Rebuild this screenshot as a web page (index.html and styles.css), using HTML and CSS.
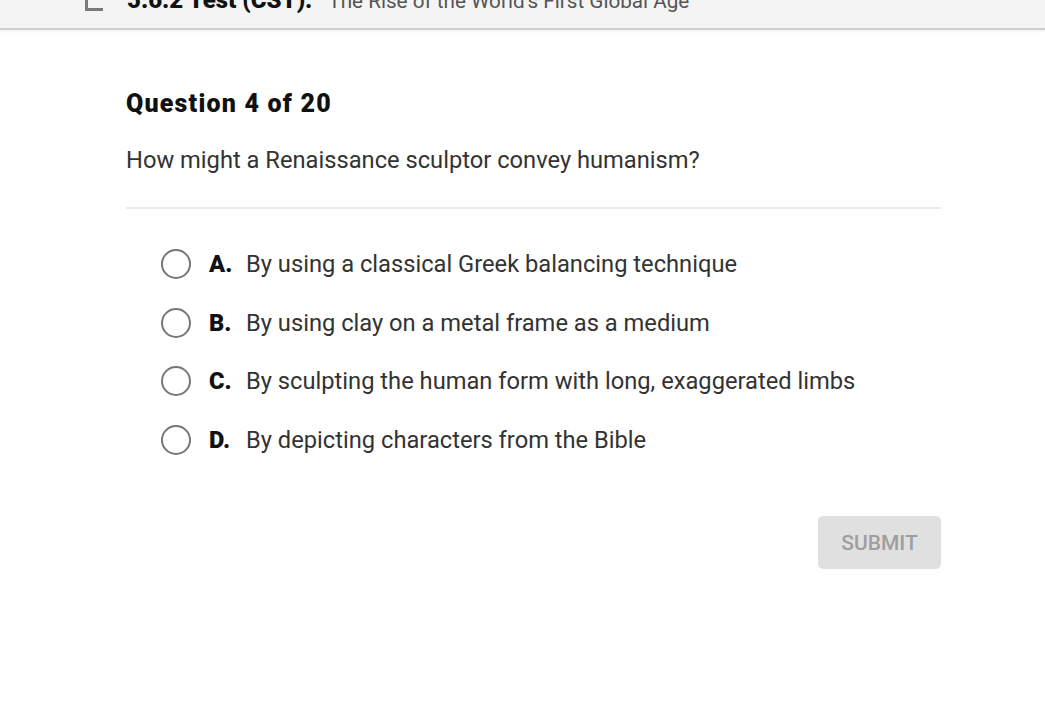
FILE: index.html
```html
<!DOCTYPE html>
<html>
<head>
<meta charset="utf-8">
<link rel="stylesheet" href="styles.css">
</head>
<body>
<header class="topbar">
  <div class="topbar-inner">
    <svg class="doc-icon" width="18" height="30" viewBox="0 0 18 30"><path d="M1.5 0 V28.5 H18" fill="none" stroke="#7a7a7a" stroke-width="3"/></svg>
    <span class="crumb-bold">5.6.2 Test (CST):</span>
    <span class="crumb-title">The Rise of the World's First Global Age</span>
  </div>
</header>
<main class="content">
  <h1 class="q-title">Question 4 of 20</h1>
  <p class="q-text">How might a Renaissance sculptor convey humanism?</p>
  <hr class="divider">
  <ul class="options">
    <li class="option"><span class="radio"></span><span class="letter">A.</span><span class="answer">By using a classical Greek balancing technique</span></li>
    <li class="option"><span class="radio"></span><span class="letter">B.</span><span class="answer">By using clay on a metal frame as a medium</span></li>
    <li class="option"><span class="radio"></span><span class="letter">C.</span><span class="answer">By sculpting the human form with long, exaggerated limbs</span></li>
    <li class="option"><span class="radio"></span><span class="letter">D.</span><span class="answer">By depicting characters from the Bible</span></li>
  </ul>
  <div class="actions">
    <button class="submit" disabled>SUBMIT</button>
  </div>
</main>
</body>
</html>
```

FILE: styles.css
```css
* { box-sizing: border-box; }
html, body { margin: 0; padding: 0; background: #fff; }
body { font-family: Roboto, "Noto Sans", Arial, sans-serif; color: #222; }

.topbar {
  height: 30px;
  background: #f4f4f4;
  border-bottom: 2px solid #cfcfcf;
  box-shadow: 0 1px 3px rgba(0,0,0,0.08);
  overflow: hidden;
  position: relative;
}
.topbar-inner {
  display: flex;
  align-items: flex-end;
  height: 9px;
  padding-left: 85px;
  white-space: nowrap;
}
.doc-icon { flex: none; margin-right: 24px; align-self: flex-end; margin-bottom: -2px; }
.crumb-bold {
  font-size: 24px;
  font-weight: 900;
  color: #111;
  line-height: 1;
  margin-bottom: -3px;
}
.crumb-title {
  font-size: 20.7px;
  color: #555;
  line-height: 1;
  margin-left: 16px;
  margin-bottom: -3px;
}

.content {
  width: 815px;
  margin-left: 126px;
  padding-top: 60px;
}
.q-title {
  margin: 0;
  font-size: 25px;
  font-weight: 900;
  letter-spacing: 1.2px;
  line-height: 28px;
  color: #111;
}
.q-text {
  margin: 28px 0 0;
  font-size: 23.7px;
  line-height: 28px;
  color: #333;
}
.divider {
  margin: 33px 0 0;
  border: 0;
  height: 2px;
  background: #ebebeb;
}
.options {
  list-style: none;
  margin: 0;
  padding: 41px 0 0 35px;
  display: flex;
  flex-direction: column;
  gap: 30.7px;
}
.option {
  display: flex;
  align-items: center;
  height: 28px;
  font-size: 23.7px;
  color: #333;
}
.radio {
  flex: none;
  width: 30px;
  height: 30px;
  border: 2.5px solid #777;
  border-radius: 50%;
  margin-right: 18px;
}
.letter {
  font-weight: 900;
  color: #111;
  width: 37px;
}
.actions {
  display: flex;
  justify-content: flex-end;
  margin-top: 62px;
}
.submit {
  width: 123px;
  height: 53px;
  border: 0;
  border-radius: 5px;
  background: #e0e0e0;
  color: #9e9e9e;
  font-family: Roboto, Arial, sans-serif;
  font-size: 21px;
  font-weight: 500;
  padding: 0;
}
```
